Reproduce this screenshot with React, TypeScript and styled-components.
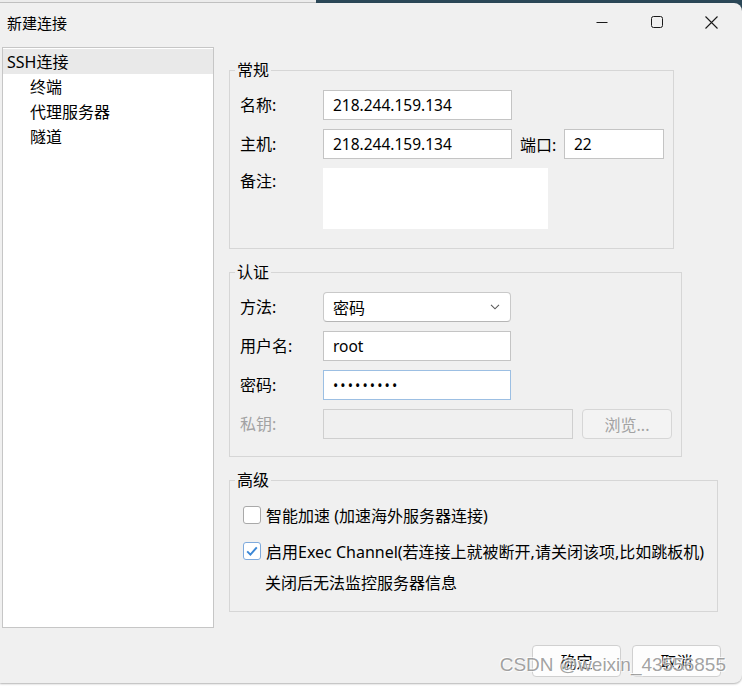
import React from "react";
import styled, { createGlobalStyle } from "styled-components";

const GlobalStyle = createGlobalStyle`
  html, body {
    margin: 0;
    padding: 0;
    background: #ffffff;
  }
  body {
    font-family: "Noto Sans", "Noto Sans CJK SC", sans-serif;
  }
  * {
    box-sizing: border-box;
  }
`;

const Desktop = styled.div`
  position: relative;
  width: 742px;
  height: 686px;
  overflow: hidden;
  display: flex;
  flex-direction: column;
  background: linear-gradient(to bottom, #2b4757 0, #2b4757 50%, #ffffff 50%);
`;

const BackStrip = styled.div`
  height: 3px;
  display: flex;
  flex: none;
`;

const BackWindowEdge = styled.div`
  width: 316px;
  background: #ececec;
  border-bottom: 1px solid #c4c4c4;
`;

const Window = styled.div`
  height: 680px;
  flex: none;
  background: #f0f0f0;
  border-radius: 0 8px 8px 0;
  box-shadow: 0 1px 2px rgba(0, 0, 0, 0.3);
  display: flex;
  flex-direction: column;
  font-size: 16px;
  color: #000;
`;

const TitleBar = styled.div`
  height: 38px;
  display: flex;
  align-items: center;
  padding: 0 3px 0 7px;
`;

const Title = styled.div`
  flex: 1;
  font-size: 15px;
`;

const Controls = styled.div`
  display: flex;
`;

const ControlButton = styled.div`
  width: 55px;
  height: 38px;
  display: flex;
  align-items: center;
  justify-content: center;
`;

const Body = styled.div`
  display: flex;
  align-items: flex-start;
  padding: 6px 0 0 2px;
`;

const Tree = styled.div`
  width: 212px;
  height: 581px;
  flex: none;
  background: #ffffff;
  border: 1px solid #c6c6c6;
  padding-top: 1px;
`;

const TreeItem = styled.div<{ $child?: boolean; $selected?: boolean }>`
  height: 25px;
  line-height: 26px;
  padding-left: ${(p) => (p.$child ? 27 : 4)}px;
  background: ${(p) => (p.$selected ? "#e9e9e9" : "transparent")};
  white-space: nowrap;
`;

const Settings = styled.div`
  margin: 13px 0 0 15px;
  display: flex;
  flex-direction: column;
  gap: 13px;
`;

const Group = styled.fieldset<{ $width: number }>`
  width: ${(p) => p.$width}px;
  margin: 0;
  padding: 0;
  min-width: 0;
  border: 1px solid #d6d6d6;
`;

const Legend = styled.legend`
  margin-left: 5px;
  padding: 0 2px;
  height: 20px;
  line-height: 20px;
  font-size: 16px;
`;

const GroupContent = styled.div<{ $pad: string; $gap: number }>`
  padding: ${(p) => p.$pad};
  display: flex;
  flex-direction: column;
  gap: ${(p) => p.$gap}px;
`;

const FieldRow = styled.div<{ $top?: boolean }>`
  display: flex;
  align-items: ${(p) => (p.$top ? "flex-start" : "center")};
`;

const Label = styled.label<{ $disabled?: boolean }>`
  width: 83px;
  flex: none;
  line-height: 26px;
  color: ${(p) => (p.$disabled ? "#a2a2a2" : "#000")};
  white-space: nowrap;
`;

const SideLabel = styled.label`
  width: 44px;
  margin-left: 8px;
  flex: none;
`;

const TextInput = styled.input<{ $width: number; $focused?: boolean }>`
  width: ${(p) => p.$width}px;
  height: 30px;
  flex: none;
  padding: 0 0 0 9px;
  margin: 0;
  border: 1px solid ${(p) => (p.$focused ? "#9cbfe3" : "#c4c4c4")};
  border-radius: 0;
  background: #ffffff;
  font-family: "Noto Sans", "Noto Sans CJK SC", sans-serif;
  font-size: 15.5px;
  color: #000;
  outline: none;

  &[type="password"] {
    letter-spacing: 2.1px;
    font-size: 14px;
  }

  &:disabled {
    background: #f0f0f0;
    border-color: #cfcfcf;
  }
`;

const Notes = styled.textarea`
  width: 225px;
  height: 61px;
  margin: 0;
  border: none;
  background: #ffffff;
  resize: none;
  outline: none;
`;

const Select = styled.div`
  width: 188px;
  height: 30px;
  flex: none;
  display: flex;
  align-items: center;
  justify-content: space-between;
  padding: 0 10px 0 9px;
  border: 1px solid #c9c9c9;
  border-bottom-color: #b5b5b5;
  border-radius: 4px;
  background: #ffffff;
`;

const BrowseButton = styled.div`
  width: 90px;
  height: 30px;
  margin-left: 9px;
  display: flex;
  align-items: center;
  justify-content: center;
  border: 1px solid #d6d6d6;
  border-radius: 4px;
  background: #f3f3f3;
  color: #a2a2a2;
`;

const CheckRow = styled.div`
  height: 36px;
  display: flex;
  align-items: center;
  gap: 5px;
  white-space: nowrap;
`;

const CheckBox = styled.div<{ $checked?: boolean }>`
  width: 18px;
  height: 18px;
  flex: none;
  border: 1px solid ${(p) => (p.$checked ? "#7eaadd" : "#a9a9a9")};
  border-radius: 3px;
  background: #ffffff;
  display: flex;
  align-items: center;
  justify-content: center;
`;

const Note = styled.div`
  height: 28px;
  line-height: 28px;
  padding-left: 22px;
`;

const Footer = styled.div`
  display: flex;
  justify-content: flex-end;
  gap: 11px;
  padding: 17px 21px 0 0;
`;

const DialogButton = styled.div`
  width: 89px;
  height: 32px;
  display: flex;
  align-items: center;
  justify-content: center;
  border: 1px solid #d0d0d0;
  border-radius: 4px;
  background: #fdfdfd;
`;

const Watermark = styled.div`
  position: absolute;
  right: 16px;
  top: 654px;
  font-family: "Liberation Sans", Arial, sans-serif;
  font-size: 19px;
  color: rgba(110, 110, 110, 0.65);
  text-shadow: 1px 1px 0 rgba(255, 255, 255, 0.8), -1px -1px 0 rgba(255, 255, 255, 0.8);
  white-space: nowrap;
`;

const Chevron = () => (
  <svg width="10" height="6" viewBox="0 0 10 6">
    <path d="M1 0.8 L5 4.8 L9 0.8" fill="none" stroke="#5a5a5a" strokeWidth="1.1" />
  </svg>
);

const Check = () => (
  <svg width="14" height="14" viewBox="0 0 14 14">
    <path d="M2.2 7.4 L5.4 10.6 L11.8 3.4" fill="none" stroke="#3b87d6" strokeWidth="1.9" />
  </svg>
);

export default function App() {
  return (
    <>
      <GlobalStyle />
      <Desktop>
        <BackStrip>
          <BackWindowEdge />
        </BackStrip>
        <Window>
          <TitleBar>
            <Title>新建连接</Title>
            <Controls>
              <ControlButton>
                <svg width="12" height="12" viewBox="0 0 12 12">
                  <path d="M0.5 6.5 H11.5" stroke="#1a1a1a" strokeWidth="1" />
                </svg>
              </ControlButton>
              <ControlButton>
                <svg width="12" height="12" viewBox="0 0 12 12">
                  <rect x="0.5" y="0.5" width="11" height="11" rx="2" fill="none" stroke="#1a1a1a" strokeWidth="1" />
                </svg>
              </ControlButton>
              <ControlButton>
                <svg width="13" height="13" viewBox="0 0 13 13">
                  <path d="M0.5 0.5 L12.5 12.5 M12.5 0.5 L0.5 12.5" stroke="#1a1a1a" strokeWidth="1.1" />
                </svg>
              </ControlButton>
            </Controls>
          </TitleBar>

          <Body>
            <Tree>
              <TreeItem $selected>SSH连接</TreeItem>
              <TreeItem $child>终端</TreeItem>
              <TreeItem $child>代理服务器</TreeItem>
              <TreeItem $child>隧道</TreeItem>
            </Tree>

            <Settings>
              <Group $width={445}>
                <Legend>常规</Legend>
                <GroupContent $pad="10px 0 19px 10px" $gap={9}>
                  <FieldRow>
                    <Label>名称:</Label>
                    <TextInput $width={189} defaultValue="218.244.159.134" readOnly />
                  </FieldRow>
                  <FieldRow>
                    <Label>主机:</Label>
                    <TextInput $width={189} defaultValue="218.244.159.134" readOnly />
                    <SideLabel>端口:</SideLabel>
                    <TextInput $width={100} defaultValue="22" readOnly />
                  </FieldRow>
                  <FieldRow $top>
                    <Label>备注:</Label>
                    <Notes readOnly />
                  </FieldRow>
                </GroupContent>
              </Group>

              <Group $width={453}>
                <Legend>认证</Legend>
                <GroupContent $pad="10px 0 17px 10px" $gap={9}>
                  <FieldRow>
                    <Label>方法:</Label>
                    <Select>
                      <span>密码</span>
                      <Chevron />
                    </Select>
                  </FieldRow>
                  <FieldRow>
                    <Label>用户名:</Label>
                    <TextInput $width={188} defaultValue="root" readOnly />
                  </FieldRow>
                  <FieldRow>
                    <Label>密码:</Label>
                    <TextInput $width={188} $focused type="password" defaultValue="123456789" readOnly />
                  </FieldRow>
                  <FieldRow>
                    <Label $disabled>私钥:</Label>
                    <TextInput $width={250} disabled />
                    <BrowseButton>浏览...</BrowseButton>
                  </FieldRow>
                </GroupContent>
              </Group>

              <Group $width={489}>
                <Legend>高级</Legend>
                <GroupContent $pad="7px 0 14px 13px" $gap={0}>
                  <CheckRow>
                    <CheckBox />
                    <span>智能加速 (加速海外服务器连接)</span>
                  </CheckRow>
                  <CheckRow>
                    <CheckBox $checked>
                      <Check />
                    </CheckBox>
                    <span>启用Exec Channel(若连接上就被断开,请关闭该项,比如跳板机)</span>
                  </CheckRow>
                  <Note>关闭后无法监控服务器信息</Note>
                </GroupContent>
              </Group>
            </Settings>
          </Body>

          <Footer>
            <DialogButton>确定</DialogButton>
            <DialogButton>取消</DialogButton>
          </Footer>
        </Window>
        <Watermark>CSDN @weixin_43556855</Watermark>
      </Desktop>
    </>
  );
}
